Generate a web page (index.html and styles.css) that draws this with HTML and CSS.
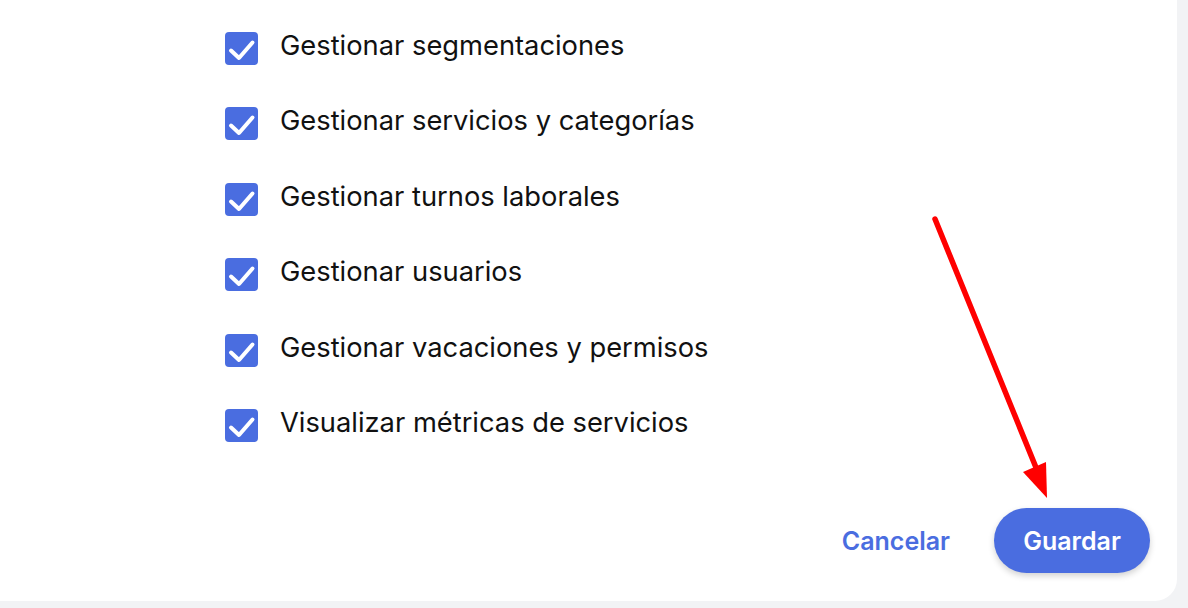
FILE: index.html
```html
<!DOCTYPE html>
<html lang="es">
<head>
    <meta charset="UTF-8">
    <meta name="viewport" content="width=device-width, initial-scale=1.0">
    <title>Permisos</title>
    <link rel="stylesheet" href="styles.css">
</head>
<body>
    <div class="permissions-card">
        <ul class="permission-list">
            <li class="permission-item">
                <span class="check-box"><svg viewBox="0 0 33 33"><polyline points="6,18.5 14,26 27.5,10.5"/></svg></span>
                <span class="permission-label">Gestionar segmentaciones</span>
            </li>
            <li class="permission-item">
                <span class="check-box"><svg viewBox="0 0 33 33"><polyline points="6,18.5 14,26 27.5,10.5"/></svg></span>
                <span class="permission-label">Gestionar servicios y categorías</span>
            </li>
            <li class="permission-item">
                <span class="check-box"><svg viewBox="0 0 33 33"><polyline points="6,18.5 14,26 27.5,10.5"/></svg></span>
                <span class="permission-label">Gestionar turnos laborales</span>
            </li>
            <li class="permission-item">
                <span class="check-box"><svg viewBox="0 0 33 33"><polyline points="6,18.5 14,26 27.5,10.5"/></svg></span>
                <span class="permission-label">Gestionar usuarios</span>
            </li>
            <li class="permission-item">
                <span class="check-box"><svg viewBox="0 0 33 33"><polyline points="6,18.5 14,26 27.5,10.5"/></svg></span>
                <span class="permission-label">Gestionar vacaciones y permisos</span>
            </li>
            <li class="permission-item">
                <span class="check-box"><svg viewBox="0 0 33 33"><polyline points="6,18.5 14,26 27.5,10.5"/></svg></span>
                <span class="permission-label">Visualizar métricas de servicios</span>
            </li>
        </ul>

        <div class="card-actions">
            <button class="btn-text">Cancelar</button>
            <button class="btn-primary">Guardar</button>
        </div>

        <!-- annotation arrow -->
        <svg class="arrow" width="1188" height="608" viewBox="0 0 1188 608">
            <line x1="935" y1="219" x2="1037" y2="470" stroke="#ff0000" stroke-width="5.5" stroke-linecap="round"/>
            <polygon points="1047,498 1023,472 1046,462" fill="#ff0000"/>
        </svg>
    </div>
</body>
</html>
```

FILE: styles.css
```css
body {
    margin: 0;
    background-color: #f2f3f5;
    font-family: Inter, "Noto Sans", sans-serif;
    color: #111;
}

.permissions-card {
    position: relative;
    box-sizing: border-box;
    width: 1177px;
    height: 601px;
    background-color: #fff;
    border-radius: 0 0 22px 0;
    display: flex;
    flex-direction: column;
    padding: 32px 27px 28px 225px;
}

.permission-list {
    list-style: none;
    margin: 0;
    padding: 0;
    display: flex;
    flex-direction: column;
    gap: 42.4px;
}

.permission-item {
    display: flex;
    align-items: center;
    gap: 22px;
    height: 33px;
    font-size: 27.3px;
}

.permission-label {
    margin-bottom: 6px;
}

.check-box {
    width: 33px;
    height: 33px;
    flex-shrink: 0;
    background-color: #4a6de0;
    border-radius: 4px;
}

.check-box svg {
    display: block;
    width: 33px;
    height: 33px;
}

.check-box polyline {
    fill: none;
    stroke: #fff;
    stroke-width: 4;
    stroke-linecap: round;
    stroke-linejoin: round;
}

.card-actions {
    margin-top: auto;
    display: flex;
    justify-content: flex-end;
    align-items: center;
    gap: 44px;
}

.btn-text,
.btn-primary {
    font-family: Inter, "Noto Sans", sans-serif;
    font-size: 25px;
    font-weight: 600;
    border: none;
    cursor: pointer;
}

.btn-text {
    background: none;
    color: #4a6de0;
    padding: 0;
}

.btn-primary {
    width: 156px;
    height: 65px;
    border-radius: 33px;
    background-color: #4a6de0;
    color: #fff;
    box-shadow: 0 3px 6px rgba(0, 0, 0, 0.18);
}

.arrow {
    position: absolute;
    left: 0;
    top: 0;
    pointer-events: none;
}
```
